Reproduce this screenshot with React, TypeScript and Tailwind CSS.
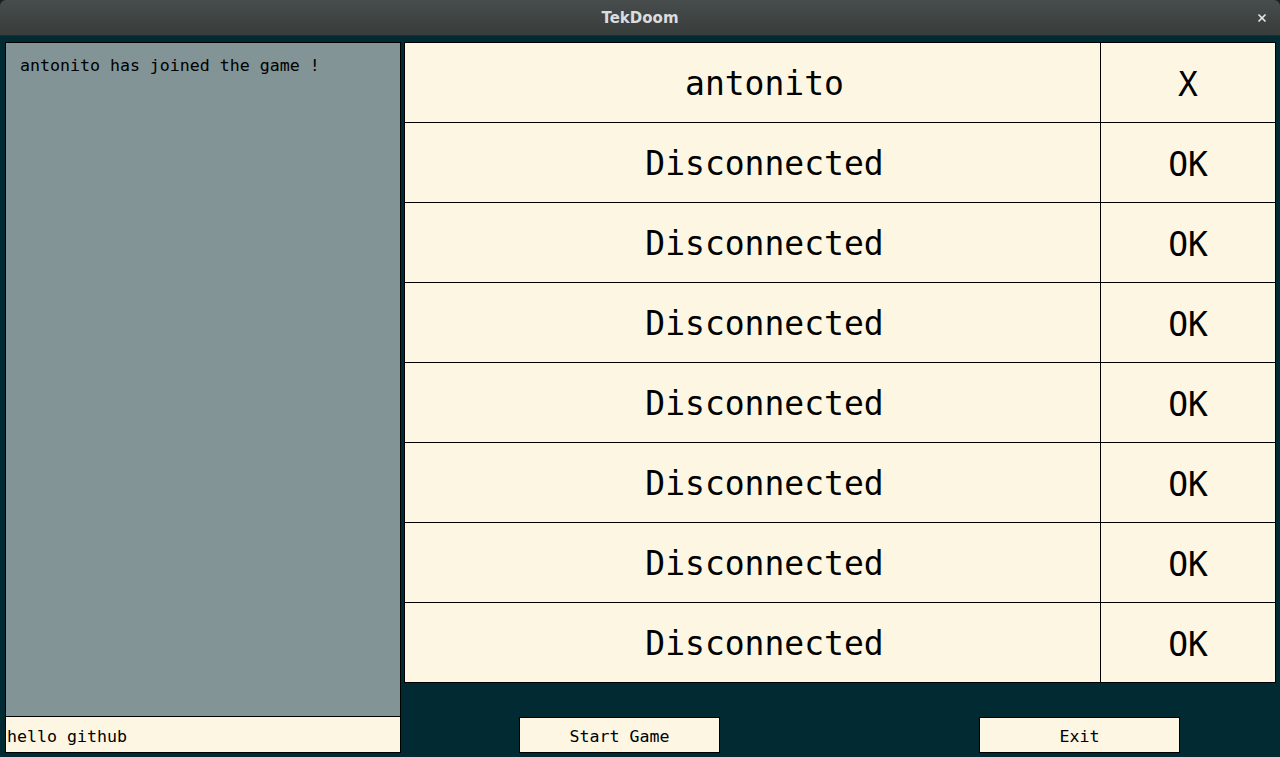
import { X } from "lucide-react";

const players = [
  { name: "antonito", status: "X" },
  { name: "Disconnected", status: "OK" },
  { name: "Disconnected", status: "OK" },
  { name: "Disconnected", status: "OK" },
  { name: "Disconnected", status: "OK" },
  { name: "Disconnected", status: "OK" },
  { name: "Disconnected", status: "OK" },
  { name: "Disconnected", status: "OK" },
];

const mono = "font-['DejaVu_Sans_Mono',monospace]";

export default function App() {
  return (
    <div className="h-[757px] w-full overflow-hidden bg-[#1c1f1f]">
      <div className="flex h-full flex-col overflow-hidden rounded-t-[6px] bg-[#022a33]">

        {/* Title bar */}

        <div className="relative flex h-[36px] shrink-0 items-center justify-center border-b border-[#262a2a] bg-gradient-to-b from-[#474d4c] to-[#383d3c] pt-[2px]">
          <span className="font-['DejaVu_Sans',sans-serif] text-[15px] font-bold text-[#dcdcdc]">
            TekDoom
          </span>
          <X
            className="absolute right-[12px] top-[12px] text-[#e6e6e6]"
            size={12}
            strokeWidth={3.5}
          />
        </div>

        <div className="flex gap-[3px] pl-[5px] pt-[6px]">

          {/* Chat */}

          <div className="flex w-[396px] flex-col">
            <div className={`h-[675px] border border-black bg-[#839496] px-[14px] pt-[11px] text-[16.6px] text-black ${mono}`}>
              antonito has joined the game !
            </div>
            <div className={`flex h-[36px] items-center border-x border-b border-black bg-[#fdf6e3] px-px pt-[6px] text-[16.6px] text-black ${mono}`}>
              hello github
            </div>
          </div>

          {/* Players */}

          <div className="flex flex-col">
            <div className="grid w-[872px] grid-cols-[696px_175px] border-l border-t border-black bg-[#fdf6e3]">
              {players.map((player, index) => (
                <div key={index} className="contents">
                  <div className={`flex h-[80px] items-center justify-center border-b border-r border-black pl-[24px] pt-[3px] text-[33px] text-black ${mono}`}>
                    {player.name}
                  </div>
                  <div className={`flex h-[80px] items-center justify-center border-b border-r border-black pt-[4px] text-[33px] text-black ${mono}`}>
                    {player.status}
                  </div>
                </div>
              ))}
            </div>

            <div className="mt-[34px] flex">
              <button className={`ml-[115px] h-[36px] w-[201px] border border-black bg-[#fdf6e3] pt-[4px] text-[16.6px] text-black ${mono}`}>
                Start Game
              </button>
              <button className={`ml-[259px] h-[36px] w-[201px] border border-black bg-[#fdf6e3] pt-[4px] text-[16.6px] text-black ${mono}`}>
                Exit
              </button>
            </div>
          </div>

        </div>
      </div>
    </div>
  );
}
